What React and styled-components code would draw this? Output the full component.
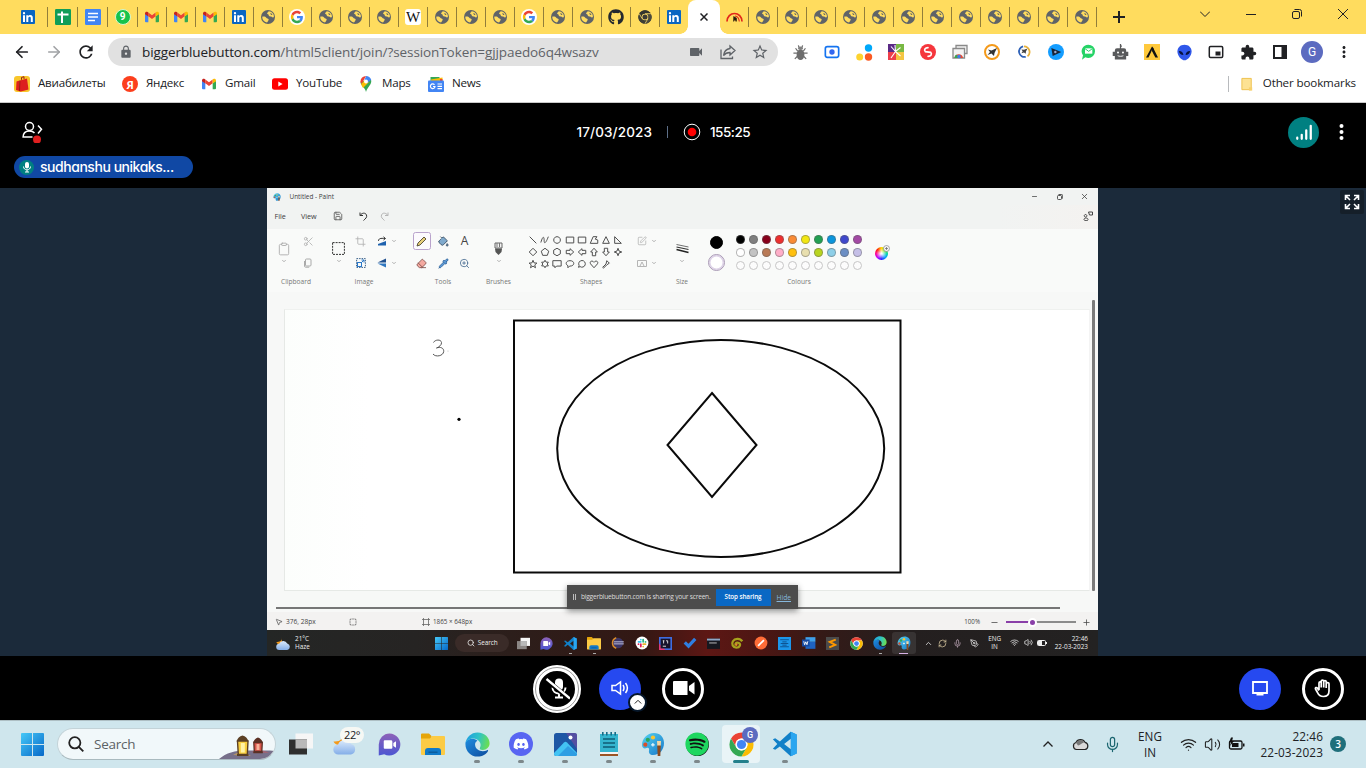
import React from "react";
import styled, { createGlobalStyle, css } from "styled-components";
import { MdLock, MdVideocam, MdStarBorder, MdMoreVert, MdRefresh, MdExtension } from "react-icons/md";
import { FaGithub, FaDiscord, FaSpotify } from "react-icons/fa";
import {
  ArrowLeft, ArrowRight, Save, Scissors, Crop, Clipboard, PaintBucket, Eraser, Pipette, ZoomIn, Mic,
  Volume2, Wifi, Search, ChevronUp, ChevronDown, SquareDashed, RefreshCw, PenTool, Plus, X, Minus,
  SquarePen, MousePointer2,
} from "lucide-react";

const UI = `"Open Sans", "Noto Sans", "Liberation Sans", sans-serif`;
const ROUND = `Inter, Lato, "Liberation Sans", sans-serif`;

const Global = createGlobalStyle`
  *, *::before, *::after { box-sizing: border-box; }
  html, body { margin: 0; padding: 0; overflow: hidden; background: #000; }
  body { font-family: ${UI}; color: #202124; }
  svg { display: block; flex: none; }
`;

const Desktop = styled.div`
  width: 1366px;
  height: 768px;
  display: flex;
  flex-direction: column;
  overflow: hidden;
`;

const Text = styled.span`
  font-size: ${(p) => p.$size || 12}px;
  color: ${(p) => p.$color || "inherit"};
  letter-spacing: ${(p) => p.$ls || 0}px;
  font-weight: ${(p) => p.$weight || 400};
  margin-left: ${(p) => p.$ml || 0}px;
  line-height: ${(p) => p.$lh || 1.2};
  white-space: nowrap;
`;

/* ---------- logos ---------- */

const Svg = ({ s = 16, children, box = "0 0 24 24", ...rest }) => (
  <svg width={s} height={s} viewBox={box} fill="none" {...rest}>{children}</svg>
);

const GmailLogo = ({ s = 16 }) => (
  <Svg s={s}>
    <path fill="#4285F4" d="M1.5 7v11.5A1.5 1.5 0 0 0 3 20h3.5V10.5z" />
    <path fill="#34A853" d="M17.5 20H21a1.5 1.5 0 0 0 1.5-1.5V7l-5 3.5z" />
    <path fill="#EA4335" d="M6.5 10.8V5.2L12 9.4l5.5-4.2v5.6L12 15z" />
    <path fill="#C5221F" d="M1.5 6.6v1.2l5 3.6V5.2l-1-.7C3.800 3.300 1.500 4.400 1.500 6.600z" />
    <path fill="#FBBC04" d="M17.500 5.200v6.200l5-3.600V6.600c0-2.200-2.300-3.300-4-2.100z" />
  </Svg>
);

const ChromeLogo = ({ s = 16, mono }) => (
  <Svg s={s}>
    <circle cx="12" cy="12" r="10" fill={mono ? "#3b3b35" : "#fff"} />
    <path fill={mono ? "#33352e" : "#EA4335"} d="M3.340 7A10 10 0 0 1 20.660 7H12A5 5 0 0 0 7.670 14.500Z" />
    <path fill={mono ? "#4b4a3c" : "#FBBC04"} d="M20.660 7A10 10 0 0 1 12 22L16.330 14.500A5 5 0 0 0 12 7Z" />
    <path fill={mono ? "#3e3f36" : "#34A853"} d="M12 22A10 10 0 0 1 3.340 7L7.670 14.500A5 5 0 0 0 16.330 14.500Z" />
    <circle cx="12" cy="12" r="4.900" fill={mono ? "#fbdc6a" : "#fff"} />
    <circle cx="12" cy="12" r="3.800" fill={mono ? "#3b3b35" : "#4285F4"} />
    {mono && <path stroke="#fbdc6a" strokeWidth="1.200" d="M12 7h9M7.700 14.500L3.400 7M16.300 14.500L12 22" />}
  </Svg>
);

const GoogleG = () => (
  <Svg s={16} box="0 0 48 48">
    <circle cx="24" cy="24" r="24" fill="#fff" />
    <g transform="translate(5.500 5.500) scale(.77)">
      <path fill="#EA4335" d="M24 9.500c3.540 0 6.710 1.220 9.210 3.600l6.850-6.850C35.900 2.380 30.470 0 24 0 14.620 0 6.510 5.380 2.560 13.220l7.980 6.190C12.430 13.720 17.740 9.500 24 9.500z" />
      <path fill="#4285F4" d="M46.980 24.550c0-1.570-.15-3.090-.38-4.550H24v9.020h12.940c-.58 2.960-2.260 5.480-4.780 7.180l7.730 6c4.510-4.180 7.090-10.360 7.090-17.650z" />
      <path fill="#FBBC05" d="M10.530 28.590c-.48-1.450-.76-2.990-.76-4.590s.27-3.140.76-4.590l-7.980-6.190C.92 16.460 0 20.120 0 24c0 3.880.92 7.540 2.560 10.780l7.970-6.190z" />
      <path fill="#34A853" d="M24 48c6.480 0 11.930-2.130 15.890-5.810l-7.730-6c-2.150 1.450-4.920 2.300-8.160 2.300-6.260 0-11.570-4.220-13.470-9.910l-7.980 6.190C6.510 42.620 14.620 48 24 48z" />
    </g>
  </Svg>
);

const EdgeLogo = ({ s = 24 }) => (
  <Svg s={s}>
    <defs>
      <linearGradient id="edgeTop" x1="0" y1=".4" x2="1" y2=".6">
        <stop offset="0" stopColor="#1f9fe0" /><stop offset=".5" stopColor="#2fc3c6" /><stop offset="1" stopColor="#6fe04a" />
      </linearGradient>
      <linearGradient id="edgeLow" x1="0" y1="0" x2="1" y2="1">
        <stop offset="0" stopColor="#1f8de0" /><stop offset="1" stopColor="#0c4a9c" />
      </linearGradient>
    </defs>
    <path fill="url(#edgeLow)" d="M2 11.500C2 17.500 6.500 22 12 22c4 0 7.300-2 8.700-4.700.3-.6-.2-.9-.7-.6-3.800 2-9.500.6-10-4.200C9.800 9.500 12 8.800 12 8.800 8 5.500 2 7.500 2 11.500z" />
    <path fill="url(#edgeTop)" d="M2 11.500C2.400 6 6.800 2 12 2c6 0 10 4.300 10 9 0 3.300-2.600 5.500-5.600 5.500-2.300 0-3-.9-2.300-2.100C16 11 12.500 7 8.500 7 5 7 2.500 9 2 11.500z" />
  </Svg>
);

const VsCodeLogo = ({ s = 24 }) => (
  <Svg s={s}>
    <path fill="#1180c8" fillRule="evenodd" d="M16.800 1.500L22 3.900V20.100L16.800 22.500 7.600 14.100 3.600 17 1.600 16 5.400 12 1.600 8 3.600 7 7.600 9.900ZM17 7.400L11.200 12 17 16.600Z" />
    <path fill="#2aa6f0" d="M17 1.500L22 3.900V20.100L17 22.500z" />
  </Svg>
);

const WinLogo = ({ s = 23 }) => (
  <Svg s={s} box="0 0 23 23">
    <defs>
      <linearGradient id="win" x1="0" y1="0" x2="23" y2="23" gradientUnits="userSpaceOnUse">
        <stop offset="0" stopColor="#45c8f8" /><stop offset="1" stopColor="#0668c8" />
      </linearGradient>
    </defs>
    <path fill="url(#win)" d="M0 1a1 1 0 0 1 1-1h10v11H0zM12 0h10a1 1 0 0 1 1 1v10H12zM0 12h11v11H1a1 1 0 0 1-1-1zM12 12h11v10a1 1 0 0 1-1 1H12z" />
  </Svg>
);

const FolderLogo = ({ s = 24 }) => (
  <Svg s={s}>
    <path fill="#e5a50a" d="M0 2.500a1 1 0 0 1 1-1h7l2.500 2.500V8H0z" />
    <path fill="#fccb45" d="M0 6.500h9l2-2.500h12a1 1 0 0 1 1 1v17a1 1 0 0 1-1 1H1a1 1 0 0 1-1-1z" />
    <path fill="#1079c8" d="M4 23v-4a3 3 0 0 1 3-3h10a3 3 0 0 1 3 3v4z" />
    <path fill="#0b5d9e" d="M7.500 19.500h9v1.500h-9z" />
  </Svg>
);

const ChatLogo = ({ s = 24 }) => (
  <Svg s={s}>
    <defs>
      <linearGradient id="chat" x1="0" y1="0" x2="0" y2="1">
        <stop offset="0" stopColor="#8d62b8" /><stop offset="1" stopColor="#4c56d2" />
      </linearGradient>
    </defs>
    <path fill="url(#chat)" d="M12 .5A11.500 11.500 0 1 1 6.500 22.200L.8 23.500V12A11.400 11.400 0 0 1 12 .5z" />
    <path fill="#fff" d="M6 8.500A1 1 0 0 1 7 7.500h6.500a1.500 1.500 0 0 1 1.500 1.500v6.500a1 1 0 0 1-1 1H7a1 1 0 0 1-1-1zM16 10.500l2.800-2v7L16 13.500z" />
  </Svg>
);

const TaskViewLogo = ({ s = 24, front = "#2f2f2f" }) => (
  <Svg s={s}>
    <path fill="#f6f6f6" d="M6.500 1.500h17.500v15H6.500z" />
    <path fill={front} d="M0 7.500h18v15H0z" />
    <path fill="#b9b9b9" d="M6.500 7.500H18v9H6.500z" />
  </Svg>
);

const WeatherLogo = ({ s = 24 }) => (
  <Svg s={s}>
    <defs>
      <linearGradient id="cloud" x1="0" y1="0" x2="0" y2="1">
        <stop offset="0" stopColor="#dcebfc" /><stop offset="1" stopColor="#84aee8" />
      </linearGradient>
    </defs>
    <path fill="#f49a1b" d="M9 2c1 4-1 8-8.500 7.500C2 13 6 14 9.500 12z" />
    <path fill="url(#cloud)" d="M5.500 22.500a5 5 0 0 1-.4-10A7 7 0 0 1 18 12a5.400 5.400 0 0 1 0 10.500z" />
  </Svg>
);

const PaintLogo = ({ s = 24 }) => (
  <Svg s={s}>
    <defs>
      <linearGradient id="pal" x1="0" y1="0" x2="1" y2="1">
        <stop offset="0" stopColor="#55d3f3" /><stop offset="1" stopColor="#1778c8" />
      </linearGradient>
    </defs>
    <path fill="url(#pal)" d="M13 1C6 1 1 7 1 13c0 3 2.500 4 4.500 3 2-.8 3 .5 2.500 2.500C7.500 21 9 23 12 23c6.500 0 11-5 11-12 0-6-4-10-10-10z" />
    <circle cx="12" cy="5.500" r="2.100" fill="#fbc531" />
    <circle cx="6.800" cy="7.800" r="2.100" fill="#2fa65a" />
    <circle cx="4.300" cy="12.700" r="2.100" fill="#d94f2b" />
    <path fill="#e9f7fb" d="M11.300 11h1.200v1.200h1.200v1.200h-1.200v1.200h-1.200v-1.200h-1.200v-1.200h1.200z" />
    <path fill="#f3d6a5" d="M16 9h4l-.3 5h-3.400z" />
    <path fill="#8a4b20" d="M16.200 13.500h3.600l-.5 10.500h-2.600z" />
  </Svg>
);

const LinkedIn = () => (
  <Svg s={14} box="0 0 14 14">
    <rect width="14" height="14" rx="1" fill="#0a66c2" />
    <path fill="#fff" d="M2 5.300h2V12H2zM3 2.100a1.150 1.150 0 1 1 0 2.300 1.150 1.150 0 0 1 0-2.300zM5.300 5.300h1.900v.9c.5-.8 1.200-1.100 2.100-1.100 2 0 2.500 1.300 2.500 3.100V12h-2V8.600c0-.9-.1-1.800-1.100-1.800S7.300 7.600 7.300 8.500V12h-2z" />
  </Svg>
);

const SheetsIcon = () => (
  <Svg s={16} box="0 0 16 16">
    <rect width="16" height="16" rx="1.200" fill="#0f9d58" />
    <path stroke="#fff" strokeWidth="2" d="M2.500 5.500h11M7 2.500V14" />
  </Svg>
);

const DocsIcon = () => (
  <Svg s={16} box="0 0 16 16">
    <rect width="16" height="16" rx="1.200" fill="#4285f4" />
    <path stroke="#fff" strokeWidth="1.600" d="M3 4.500h10M3 8h10M3 11.500h7" />
  </Svg>
);

const RoundBadge = styled.span`
  width: ${(p) => p.$s}px;
  height: ${(p) => p.$s}px;
  border-radius: ${(p) => p.$r || "50%"};
  background: ${(p) => p.$bg};
  color: ${(p) => p.$fg || "#fff"};
  border: ${(p) => p.$border || "none"};
  font: ${(p) => p.$font || "600 10px/1 Roboto, sans-serif"};
  display: flex;
  align-items: center;
  justify-content: center;
  flex: none;
`;

const SpeedIcon = () => (
  <Svg s={17} box="0 0 17 17">
    <path stroke="#e3261a" strokeWidth="1.700" d="M1 12.500C1.200 7.500 4.500 4.500 8.500 4.500s7.300 3 7.500 8" />
    <path stroke="#e3261a" strokeWidth="1.100" d="M9 7c2.500.3 4 2.500 4.300 5.500" />
    <path fill="#2c1c0a" d="M7.400 7L10.800 9v3.500H9.600L9 10.800l-1 1.700h-.8z" />
  </Svg>
);

/* ---------- browser ---------- */

const TabStrip = styled.div`
  height: 34px;
  display: flex;
  background: #ffdc5e;
  flex: none;
`;

const Tab = styled.div`
  width: ${(p) => p.$w}px;
  padding: 0 1px 0 ${(p) => p.$pl || 0}px;
  height: 34px;
  display: flex;
  align-items: center;
  justify-content: center;
  background: ${(p) => (p.$sep === false ? "none" : "linear-gradient(#927e3a, #927e3a) right 0 top 7px / 1px 20px no-repeat")};
`;

const ActiveTab = styled.div`
  position: relative;
  width: 32px;
  height: 34px;
  margin-left: -1px;
  background: #fff;
  border-radius: 8px 8px 0 0;
  display: flex;
  align-items: center;
  justify-content: center;
  &::before, &::after {
    content: "";
    position: absolute;
    bottom: 0;
    width: 8px;
    height: 8px;
  }
  &::before { left: -8px; background: radial-gradient(circle at 0 0, transparent 7.500px, #fff 8px); }
  &::after { right: -8px; background: radial-gradient(circle at 100% 0, transparent 7.500px, #fff 8px); }
`;

const NewTab = styled.div`
  width: 44px;
  display: flex;
  align-items: center;
  justify-content: center;
`;

const WindowButtons = styled.div`
  margin-left: auto;
  display: flex;
  height: 28px;
  width: 184px;
`;

const WindowButton = styled.div`
  width: 46px;
  display: flex;
  align-items: center;
  justify-content: center;
`;

const Globe = () => (
  <Svg s={14} box="0 0 14 14">
    <circle cx="7" cy="7" r="7" fill="#5f6368" />
    <path fill="#ffdc5e" d="M1.200 6.800C3 6.400 4.600 6.600 5.300 7.800c.5.800 1.800.6 2.300 1.400.4.800-.4 1.200-.6 1.900-.1.500-.5 1-1 1.400A5.900 5.900 0 0 1 1.200 6.800z" />
    <path fill="#ffdc5e" d="M7.600 1.200c2 .1 3.800 1.200 4.700 2.900.5.900.7 1.900.6 3-.8.600-1.700.2-2.300-.4-.6-.5-1.400-.1-2.200-.4-.9-.4-.3-1.300-1-1.800-.5-.4-1.300-.4-1.300-1.200 0-.9 1.100-.9 1.500-2.100z" />
    <path fill="#5f6368" d="M9 3.200l1.600.3.900 1.300-1.300.2z" />
  </Svg>
);
const Wiki = () => <RoundBadge $s={16} $r="3px" $bg="#fff" $fg="#111" $font='400 15px/1 "Liberation Serif", serif'>W</RoundBadge>;
const WhatsApp = () => <RoundBadge $s={16} $bg="#17c34b" $border="1px solid #d9f7cf" $font="700 10px/1 Roboto, sans-serif">9</RoundBadge>;

const leftTabs = [
  [48, LinkedIn, 8], [30, SheetsIcon], [30, DocsIcon], [30, WhatsApp],
  ...[GmailLogo, GmailLogo, GmailLogo, LinkedIn, Globe, GoogleG, Globe, Globe, Globe, Wiki, Globe, Globe,
    Globe, GoogleG, Globe, Globe, () => <FaGithub size={16} color="#24292f" />, () => <ChromeLogo mono />, LinkedIn].map((I) => [29, I]),
];

const Toolbar = styled.div`
  height: 36px;
  background: #fff;
  display: flex;
  align-items: center;
  flex: none;
  padding: 0 6px;
`;

const Cell = styled.div`
  width: ${(p) => p.$w || 32}px;
  display: flex;
  align-items: center;
  justify-content: center;
  flex: none;
`;

const AddressBar = styled.div`
  width: 670px;
  height: 28px;
  margin: 0 6px 0 6px;
  border-radius: 14px;
  background: #e1e1e1;
  display: flex;
  align-items: center;
  padding: 0 2px 0 11px;
`;

const AddressText = styled.div`
  flex: 1;
  margin-left: 9px;
  font-size: 13.500px;
  letter-spacing: -0.090px;
  color: #5f6368;
  white-space: nowrap;
  b { font-weight: 400; color: #202124; }
`;

const BookmarkBar = styled.div`
  height: 33px;
  background: #fff;
  border-bottom: 1px solid #c9c9c9;
  display: flex;
  align-items: center;
  padding: 0 10px 4px 14px;
  flex: none;
`;

const Bookmark = styled.div`
  width: ${(p) => p.$w}px;
  display: flex;
  align-items: center;
  gap: 8px;
  font-size: 11.600px;
  line-height: 16px;
  letter-spacing: -0.220px;
  white-space: nowrap;
`;

const BookmarkLabel = styled.span`
  padding-bottom: 2px;
`;

const OtherBookmarks = styled.div`
  margin-left: auto;
  height: 16px;
  border-left: 1px solid #b8babd;
  padding-left: 11px;
  display: flex;
  align-items: center;
  gap: 8px;
  font-size: 11.600px;
  line-height: 16px;
  letter-spacing: -0.130px;
  white-space: nowrap;
`;

const extensions = [
  <Svg s={17}><path stroke="#6d6d6d" strokeWidth="1.700" d="M5 6l3 4M19 6l-3 4M2 13h5M22 13h-5M4 21l4-4M20 21l-4-4M9 2l1 3M15 2l-1 3" /><ellipse cx="12" cy="15" rx="5.500" ry="7.500" fill="#6d6d6d" /><ellipse cx="12" cy="6" rx="3.500" ry="2.500" fill="#808080" /></Svg>,
  <Svg s={16}><rect x="2" y="4" width="20" height="16" rx="3" stroke="#1473f0" strokeWidth="2.500" /><circle cx="12" cy="12" r="4" fill="#3367f0" /></Svg>,
  <Svg s={17} box="0 0 17 17"><circle cx="12.500" cy="4" r="3.700" fill="#00a8fa" /><circle cx="3.700" cy="13" r="3.500" fill="#fdd32f" /><circle cx="12.500" cy="13" r="3.700" fill="#fb5a23" /></Svg>,
  <Svg s={16} box="0 0 16 16"><path fill="#5a2a86" d="M0 0h8v8H0z" /><path fill="#78b843" d="M8 0h8v8H8z" /><path fill="#ee3e4a" d="M0 8h8v8H0z" /><path fill="#f4c542" d="M8 8h8v8H8z" /><path stroke="#fff" strokeWidth="1.100" d="M3 14L7.500 7.500l5 4.500M3 2.500l4.500 5 5-4M7 1l.5 6.500" /></Svg>,
  <Svg s={16}><circle cx="12" cy="12" r="12" fill="#f5363c" /><path stroke="#fff" strokeWidth="2.400" strokeLinecap="round" d="M12 5.500C7.500 5.500 5.500 9 8 11.500l8 1M12 18.500c4.500 0 6.500-3.500 4-6l-8-1" /></Svg>,
  <Svg s={16} box="0 0 16 16"><path stroke="#8a8a8a" strokeWidth="1.300" d="M4 4V1.500h11v8h-2M1 14V4.500h11.500V14z" fill="#f3f3f3" /><path fill="#e24a33" d="M2.500 14a4.300 4.300 0 0 1 8.500 0z" /><path fill="#34a853" d="M2.500 14c0-2 1-3 2-3.500L6 14z" /><circle cx="7" cy="12.500" r="1.700" fill="#3c7ff0" /></Svg>,
  <Svg s={16} box="0 0 16 16"><circle cx="8" cy="8" r="7" stroke="#f49a1b" strokeWidth="2" fill="#fff" /><path fill="#333" d="M13 4L7.500 6.500 4 5.500l2 2.500-2.500 3 4-1.500 2.500 2.500.5-3z" /></Svg>,
  <Svg s={14} box="0 0 16 16"><path stroke="#e9b23c" strokeWidth="2" d="M8 1.500a6.500 6.500 0 0 1 4 11.500" /><path stroke="#2f62b8" strokeWidth="2" d="M7 1.500a6 6 0 1 0 3 12" /><path fill="#444" d="M12 4L8 5.500 5 5l1.500 2L5 9.500l3-1L10 10l.2-2.500z" /></Svg>,
  <Svg s={16}><circle cx="12" cy="12" r="12" fill="#149dff" /><path fill="#1a2536" d="M5 6l15 6-13 6z" /><circle cx="11" cy="12" r="1.800" fill="#9ac" /></Svg>,
  <Svg s={16}><path fill="#25d366" d="M12.500 1a10 10 0 0 1 0 20c-1.500 0-3-.3-4.500-1l-5 3.500L4.500 17A10 10 0 0 1 12.500 1z" /><path fill="#fff" d="M7.500 6.500h11v8h-11z" /><path stroke="#25d366" strokeWidth="1.500" d="M7.500 7l5.500 4 5.500-4" /></Svg>,
  <Svg s={17}><path fill="#58595b" d="M11.100 0h1.800v2H14v2h-1.100v2H17a3 3 0 0 1 3 3v2h3v6h-3v5H4v-5H1v-6h3V9a3 3 0 0 1 3-3h4.100z" /><circle cx="8.500" cy="12" r="1.400" fill="#fff" /><circle cx="15.500" cy="12" r="1.400" fill="#fff" /><path stroke="#fff" strokeWidth="1.200" d="M8 16.500c2 1.200 6 1.200 8 0" /></Svg>,
  <Svg s={16} box="0 0 16 16"><path fill="#ffc93c" d="M0 0h16v16H0z" /><path fill="#111" d="M2 13.500h2.500L8 6l1.500 3 1 .5-1-5L8 2.500z" /><path fill="#111" d="M8.500 2.500L14 13.500h-2.700L8 7z" /></Svg>,
  <Svg s={17}><path fill="#2f57ea" d="M12 1c6 0 10 4 10 9.500C22 17 16 23 12 23S2 17 2 10.500C2 5 6 1 12 1z" /><path fill="#07113a" d="M4 10c4 0 6 2 6.500 5.500C7 15.500 4.500 14 4 10zM20 10c-4 0-6 2-6.500 5.500C17 15.500 19.500 14 20 10z" /></Svg>,
  <Svg s={16} box="0 0 16 16"><rect x="1.300" y="2.500" width="13.400" height="11" rx="1.200" stroke="#202124" strokeWidth="1.500" /><path fill="#202124" d="M7.500 7.500h5v4h-5z" /></Svg>,
  <MdExtension size={17} color="#202124" />,
  <Svg s={14} box="0 0 14 14"><path stroke="#202124" strokeWidth="2" d="M1 1h12v12H1z" /><path fill="#202124" d="M8.500 1H13v12H8.500z" /></Svg>,
  <RoundBadge $s={22} $bg="#5c6bc0" $font="400 12px/1 Roboto, sans-serif">G</RoundBadge>,
  <MdMoreVert size={18} color="#202124" />,
];

const AviaIcon = () => (
  <Svg s={16} box="0 0 16 16"><rect width="16" height="16" rx="3" fill="#f9c62b" /><path fill="#dd1f1f" d="M2.500 5.500l3-1L5 15l-3-1zM6 4.500L13 2.500l1.500 11L7 15.500H5.500z" /><path stroke="#8d1010" strokeWidth=".9" d="M5.800 4.500L5.500 15M7.500 3.800V1.500l2.500-.8V3" /></Svg>
);
const YouTubeIcon = () => (
  <Svg s={16} box="0 0 16 16"><rect y="2.200" width="16" height="11.600" rx="2.500" fill="#f00" /><path fill="#fff" d="M6.300 5.500v5l4.300-2.500z" /></Svg>
);
const MapsIcon = () => (
  <Svg s={16} box="0 0 16 16"><path fill="#34a853" d="M8 16C7.500 12 2.500 10 2.500 5.800L13 3.500c1.500 5-3.500 7-5 12.500z" /><path fill="#fbbc04" d="M3 8l6-6 2 4-6 6z" /><path fill="#4285f4" d="M8 0c2.500 0 4.500 1.500 5.200 3.700L9.500 7 6.500 4z" /><path fill="#ea4335" d="M2.500 5.500A5.500 5.500 0 0 1 8 0L4.500 6.500 3 7.500z" /><circle cx="8" cy="5.500" r="2" fill="#fff" /></Svg>
);
const NewsIcon = () => (
  <Svg s={16} box="0 0 16 16"><path fill="#34a853" d="M2.500 1h9v5h-9z" /><path fill="#fbbc04" d="M3 3.500L14.500 1.500V7H3z" /><path fill="#ea4335" d="M12 3h2.500v4H12z" /><rect y="4.500" width="16" height="11.500" rx="1" fill="#4285f4" /><path stroke="#fff" strokeWidth="1.200" d="M9.500 8H14M9.500 10.300H14M9.500 12.600H14M6.500 8.800A2.300 2.300 0 1 0 7 10.500H5" /></Svg>
);

const bookmarks = [
  [108, <AviaIcon key="i" />, "Авиабилеты"],
  [79, <RoundBadge key="i" $s={16} $bg="#fc3f1d" $font='700 11px/1 "Open Sans", sans-serif'>Я</RoundBadge>, "Яндекс"],
  [71, <GmailLogo key="i" />, "Gmail"],
  [86, <YouTubeIcon key="i" />, "YouTube"],
  [70, <MapsIcon key="i" />, "Maps"],
  [60, <NewsIcon key="i" />, "News"],
];

const Browser = () => (
  <>
    <TabStrip>
      {leftTabs.map(([w, I, pl], i) => <Tab key={i} $w={w} $pl={pl} $sep={i !== leftTabs.length - 1}><I /></Tab>)}
      <ActiveTab>
        <Svg s={8} box="0 0 8 8"><path stroke="#202124" strokeWidth="1.500" d="M.5.500l7 7M7.500.500l-7 7" /></Svg>
      </ActiveTab>
      <Tab $w={29}><SpeedIcon /></Tab>
      {Array.from({ length: 12 }, (_, i) => <Tab key={i} $w={29}><Globe /></Tab>)}
      <NewTab><Svg s={12} box="0 0 12 12"><path stroke="#202124" strokeWidth="2" d="M6 0v12M0 6h12" /></Svg></NewTab>
      <WindowButtons>
        <WindowButton><Svg s={10} box="0 0 10 10"><path stroke="#202124" d="M0 2.500l5 5 5-5" /></Svg></WindowButton>
        <WindowButton><Svg s={10} box="0 0 10 10"><path stroke="#202124" d="M0 5.500h10" /></Svg></WindowButton>
        <WindowButton><Svg s={10} box="0 0 10 10"><rect x=".5" y="2.500" width="7" height="7" rx="1.500" stroke="#202124" /><path stroke="#202124" d="M2.500.500h5a2 2 0 0 1 2 2v5" /></Svg></WindowButton>
        <WindowButton><Svg s={10} box="0 0 10 10"><path stroke="#202124" d="M0 0l10 10M10 0L0 10" /></Svg></WindowButton>
      </WindowButtons>
    </TabStrip>
    <Toolbar>
      <Cell><ArrowLeft size={18} strokeWidth={2.300} color="#202124" /></Cell>
      <Cell><ArrowRight size={18} strokeWidth={2.200} color="#a0a2a5" /></Cell>
      <Cell><MdRefresh size={20} color="#202124" /></Cell>
      <AddressBar>
        <MdLock size={14} color="#5f6368" />
        <AddressText><b>biggerbluebutton.com</b>/html5client/join/?sessionToken=gjjpaedo6q4wsazv</AddressText>
        <Cell><MdVideocam size={16} color="#5f6368" /></Cell>
        <Cell><Svg s={16} box="0 0 16 16"><path stroke="#5f6368" strokeWidth="1.300" d="M1 5.500v9h11.500v-2M10 2l5 4.500L10 11V8.500C7 8.500 5 9.500 3.500 11.500 4 8 6 5 10 4.500z" /></Svg></Cell>
        <Cell><MdStarBorder size={18} color="#5f6368" /></Cell>
      </AddressBar>
      {extensions.map((e, i) => <Cell key={i}>{e}</Cell>)}
    </Toolbar>
    <BookmarkBar>
      {bookmarks.map(([w, icon, label]) => <Bookmark key={label} $w={w}>{icon}<BookmarkLabel>{label}</BookmarkLabel></Bookmark>)}
      <OtherBookmarks>
        <Svg s={15} box="0 0 15 16"><path fill="#fde293" stroke="#eec04a" d="M1.500 1.500h10v12h-10z" /><path fill="#f7d06b" d="M9 11h3.500v3.500H9z" /></Svg>
        <BookmarkLabel>Other bookmarks</BookmarkLabel>
      </OtherBookmarks>
    </BookmarkBar>
  </>
);

/* ---------- conference ---------- */

const MeetingHeader = styled.header`
  height: 85px;
  background: #000;
  color: #fff;
  font-family: ${ROUND};
  font-feature-settings: "cv11";
  flex: none;
  padding: 11px 14px 0;
`;

const HeaderRow = styled.div`
  height: 36px;
  display: grid;
  grid-template-columns: 1fr auto 1fr;
  align-items: center;
`;

const PeopleButton = styled.div`
  padding: 0 0 2px 7px;
`;

const MeetingInfo = styled.div`
  width: 174px;
  margin-right: 39px;
  display: flex;
  align-items: center;
`;

const Divider = styled.span`
  width: 1px;
  height: 12px;
  margin: 0 15px;
  background: #5d6f88;
`;

const HeaderActions = styled.div`
  display: flex;
  justify-content: flex-end;
  align-items: center;
`;

const TalkingPill = styled.div`
  width: 179px;
  height: 22px;
  margin-top: 6px;
  border-radius: 11px;
  background: #1048a4;
  display: flex;
  align-items: center;
  padding-left: 5px;
`;

const Stage = styled.main`
  height: 468px;
  background: #1b2a3a;
  display: flex;
  justify-content: space-between;
  padding-left: 267px;
  flex: none;
`;

const FullscreenButton = styled.div`
  width: 24px;
  height: 24px;
  margin: 2px 2px 0 0;
  background: #151f29;
  border-radius: 2px;
  display: flex;
  align-items: center;
  justify-content: center;
`;

const ActionsBar = styled.footer`
  height: 64px;
  background: #000;
  display: flex;
  align-items: center;
  padding: 1px 22px 0 533px;
  flex: none;
`;

const RoundButton = styled.div`
  position: relative;
  width: 42px;
  height: 42px;
  border-radius: 50%;
  margin-left: ${(p) => p.$ml || 0}px;
  background: ${(p) => (p.$filled ? "#2649f0" : "#000")};
  border: ${(p) => (p.$filled ? "none" : "3px solid #fff")};
  display: flex;
  align-items: center;
  justify-content: center;
  flex: none;
  ${(p) => p.$focused && css`
    width: 48px;
    height: 48px;
    border-width: 6px;
    &::before {
      content: "";
      position: absolute;
      inset: -4px;
      border-radius: 50%;
      border: 1px solid #9a9a9a;
    }
  `}
`;

const ButtonBadge = styled.span`
  position: absolute;
  right: -6px;
  bottom: -2px;
  width: 19px;
  height: 19px;
  border-radius: 50%;
  border: 2.500px solid #06172a;
  background: #fff;
  display: flex;
  align-items: center;
  justify-content: center;
`;

const PushRight = styled.div`
  margin-left: auto;
  display: flex;
  align-items: center;
`;

/* ---------- shared screen: Paint ---------- */

const SharedScreen = styled.div`
  position: relative;
  width: 831px;
  height: 468px;
  background: #f7f8f7;
  color: #3c3c3c;
  display: flex;
  flex-direction: column;
`;

const PaintTitle = styled.div`
  height: 17px;
  background: #f1f3f2;
  display: flex;
  align-items: center;
  padding: 0 1px 0 6px;
`;

const PaintMenu = styled.div`
  height: 24px;
  background: linear-gradient(90deg, #f1f3f2 0 88%, #f4f2f0);
  display: flex;
  align-items: center;
  padding: 0 5px 2px 7.500px;
`;

const Ribbon = styled.div`
  height: 63px;
  background: #f9faf9;
  display: flex;
  padding-top: 1px;
`;

const Group = styled.div`
  width: ${(p) => p.$w}px;
  display: flex;
  flex-direction: column;
  align-items: center;
`;

const Tools = styled.div`
  height: 44px;
  width: 100%;
  display: flex;
  justify-content: center;
`;

const Column = styled.div`
  width: ${(p) => p.$w}px;
  padding-left: ${(p) => p.$pl || 0}px;
  padding-top: ${(p) => p.$pt || 0}px;
  flex: none;
`;

const ToolRow = styled.div`
  height: ${(p) => p.$h || 22}px;
  display: flex;
  align-items: center;
  justify-content: ${(p) => p.$justify || "center"};
  gap: 4px;
`;

const GroupLabel = styled.div`
  font-size: 6.600px;
  line-height: 15px;
  color: #777;
  white-space: nowrap;
`;

const SelectedTool = styled.div`
  width: 18px;
  height: 18px;
  border: 1px solid #b9a3cc;
  border-radius: 2.500px;
  background: #fcfafd;
  display: flex;
  align-items: center;
  justify-content: center;
`;

const ShapeGrid = styled.div`
  display: grid;
  grid-template-columns: repeat(8, 12.150px);
  grid-auto-rows: 12px;
  place-items: center;
  margin-left: 13px;
  padding-top: 4px;
`;

const Palette = styled.div`
  display: grid;
  grid-template-columns: repeat(10, 13px);
  grid-auto-rows: 13px;
  place-items: center;
  padding-top: 3px;
`;

const Swatch = styled.span`
  width: ${(p) => p.$s || 9}px;
  height: ${(p) => p.$s || 9}px;
  border-radius: 50%;
  background: ${(p) => p.$c};
  border: 1px solid ${(p) => p.$b || "rgba(90,90,90,.45)"};
  box-shadow: ${(p) => (p.$ring ? "inset 0 0 0 1.500px #ded3e8" : "none")};
`;

const ColourWheel = styled.div`
  position: relative;
  width: 13px;
  height: 13px;
  margin: 17px 0 0 11px;
  border-radius: 50%;
  background: radial-gradient(circle, #fff 5%, transparent 60%), conic-gradient(#ffd500, #6fe000, #00d5a0, #00a0ff, #3020ff, #c000ff, #ff0090, #ff2000, #ffd500);
  svg { position: absolute; right: -2px; top: -2px; }
`;

const Workspace = styled.div`
  position: relative;
  height: 320px;
  padding: 17px 4px 0 17px;
  display: flex;
  gap: 2px;
`;

const Canvas = styled.div`
  width: 806px;
  height: 282px;
  flex: none;
  background: linear-gradient(90deg, #fcfefc, #fff 84px);
  border: 1px solid #e6e9e6;
  border-top-color: #eff1ef;
  border-right-color: #f4f4f4;
  svg { margin-left: -1px; }
`;

const VScroll = styled.div`
  width: 3px;
  height: 291px;
  flex: none;
  margin-top: -9px;
  border-radius: 1px;
  background: #7b7b7b;
`;

const HScroll = styled.div`
  position: absolute;
  left: 9px;
  bottom: 3px;
  width: 784px;
  height: 2px;
  background: #767676;
`;

const ShareNotice = styled.div`
  position: absolute;
  left: 300px;
  top: 397px;
  width: 231px;
  height: 24px;
  background: #4c4c4c;
  box-shadow: 0 2px 6px rgba(0, 0, 0, 0.45);
  display: flex;
  align-items: center;
  padding: 0 7px 0 5px;
  color: #dcdcdc;
`;

const StopButton = styled.div`
  width: 55px;
  height: 17px;
  margin-left: auto;
  background: #0a68c4;
  display: flex;
  align-items: center;
  justify-content: center;
`;

const HideLink = styled.span`
  margin-left: 6px;
  font-size: 6.700px;
  color: #86b8dd;
  text-decoration: underline;
`;

const StatusBar = styled.div`
  height: 18px;
  background: #f3f2f1;
  display: flex;
  align-items: center;
  padding: 2px 7px 0 8px;
  color: #444;
`;

const StatusItem = styled.div`
  width: ${(p) => p.$w}px;
  display: flex;
  align-items: center;
  gap: 3px;
`;

const ZoomTrack = styled.div`
  width: 70px;
  height: 2px;
  margin: 0 6px 0 -2px;
  background: linear-gradient(90deg, #8a3fa8 27px, #8b8b8b 27px);
  display: flex;
  align-items: center;
  padding-left: 22px;
`;

const ZoomThumb = styled.span`
  width: 9px;
  height: 9px;
  border-radius: 50%;
  background: #8a3fa8;
  border: 2px solid #fff;
`;

const PaintWindowButtons = styled.div`
  margin-left: auto;
  display: flex;
  align-items: center;
`;

const DarkTaskbar = styled.div`
  height: 26px;
  background: linear-gradient(90deg, #242625 0%, #262423 18%, #2b1f1c 27%, #331814 45%, #5d1714 53%, #4b1613 60%, #341a17 67%, #241f1f 77%, #232222 100%);
  display: flex;
  align-items: center;
  padding: 0 10px 0 9px;
  color: #eee;
`;

const DarkSearch = styled.div`
  width: 54px;
  height: 18px;
  margin: 0 2px 0 7px;
  border-radius: 9px;
  background: #3a2b28;
  display: flex;
  align-items: center;
  justify-content: center;
  gap: 3px;
`;

const MiniCell = styled.div`
  width: ${(p) => p.$w || 23.800}px;
  height: 22px;
  border-radius: 3px;
  flex: none;
  display: flex;
  align-items: center;
  justify-content: center;
`;

const MiniApp = styled(MiniCell)`
  position: relative;
  background: ${(p) => (p.$active ? "rgba(255,255,255,.09)" : "none")};
  &::after {
    content: "";
    display: ${(p) => (p.$running ? "block" : "none")};
    position: absolute;
    bottom: 0;
    width: ${(p) => (p.$active ? 9 : 3)}px;
    height: 1px;
    background: ${(p) => (p.$active ? "#d9b3e6" : "#aaa")};
  }
`;

const Stack = styled.div`
  display: flex;
  flex-direction: column;
  align-items: ${(p) => p.$align || "flex-start"};
  margin-left: ${(p) => p.$ml || 0}px;
`;

const TaskApps = styled.div`
  margin-left: auto;
  display: flex;
  align-items: center;
  width: 486px;
`;

const TrayIcons = styled.div`
  width: 37px;
  margin-left: 9px;
  display: flex;
  justify-content: space-between;
`;

const RightStack = styled.div`
  width: 41px;
  display: flex;
  flex-direction: column;
  align-items: flex-end;
`;

const shapePaths = [
  "M2 2l8 8", "M1 9c3-10 4-6 4-2s2 3 5-5", "M6 2a4 4 0 1 0 .1 0z", "M1.500 2.500h9v7h-9z", "M1.500 2.500h9v7h-9z", "M5 2h4.500L7.500 5l3 1v4H1.500z", "M6 2l4 8H2z", "M2 2v8h8z",
  "M6 1.500L10.500 6 6 10.500 1.500 6z", "M6 1.500l4.500 3.500-1.700 5H3.200L1.500 5z", "M6 1.500l4 2.300v4.400L6 10.500 2 8.200V3.800z", "M1.500 4h4.500V2l4.500 4L6 10V8H1.500z", "M10.500 4H6V2L1.500 6 6 10V8h4.500z", "M4 10.500V6H2l4-4.500L10 6H8v4.500z", "M4 1.500V6H2l4 4.500L10 6H8V1.500z", "M6 1.500l1.200 3.300L10.500 6 7.200 7.200 6 10.500 4.800 7.200 1.500 6l3.300-1.200z",
  "M6 1.500l1.300 3.200 3.400.2-2.600 2.200.9 3.400L6 8.500l-3 2 .9-3.400L1.300 4.900l3.400-.2z", "M6 1.500l1.300 2.300H10L8.700 6 10 8.300H7.300L6 10.500 4.700 8.300H2L3.300 6 2 3.800h2.700z", "M1 2h10v6.500H5.500L3.500 10.500V8.500H1z", "M6 2c6 0 6 6.500 0 6.500h-.5L3.500 10.500V8C0 6.500 1 2 6 2z", "M6 1.800a4 4 0 1 1-2.300 7.300L1.800 10l.7-2.300A4 4 0 0 1 6 1.800z", "M6 10.500L2 6C0 3 4 1 6 4c2-3 6-1 4 2z", "M7 2l3 3-3 2-4 4-1-1 4-4z",
];

const palette = [
  "#000000", "#7f7f7f", "#88001b", "#ed2f2f", "#f98b35", "#f2e713", "#22a052", "#0b95dc", "#3f48cc", "#a349a4",
  "#ffffff", "#c3c3c3", "#b97a56", "#ffaec8", "#ffc00e", "#e8dfae", "#b8d420", "#8ecfe8", "#6c8fc4", "#c5bfe7",
];

const Chevron = () => <ChevronDown size={6} color="#888" strokeWidth={2.500} />;
const ic = { size: 11, strokeWidth: 1.800, color: "#555" };
const pale = { size: 11, strokeWidth: 1.800, color: "#b0b0b0" };

const PaintRibbon = () => (
  <Ribbon>
    <Group $w={58}>
      <Tools>
        <Column $w={24} $pt={10}><ToolRow $h={17}><Clipboard size={14} strokeWidth={1.500} color="#aaa" /></ToolRow><ToolRow $h={8}><Chevron /></ToolRow></Column>
        <Column $w={24}><ToolRow><Scissors {...pale} /></ToolRow><ToolRow><Svg s={10} box="0 0 10 10"><rect x="2.500" y="1" width="5.500" height="7" rx="1" stroke="#aaa" /><path stroke="#aaa" d="M1.500 3v5a1.200 1.200 0 0 0 1.200 1.200h3.500" /></Svg></ToolRow></Column>
      </Tools>
      <GroupLabel>Clipboard</GroupLabel>
    </Group>
    <Group $w={78}>
      <Tools>
        <Column $w={27} $pt={10}><ToolRow $h={17}><Svg s={13} box="0 0 13 13"><rect x=".6" y=".6" width="11.800" height="11.800" stroke="#333" strokeDasharray="2 1" /></Svg></ToolRow><ToolRow $h={8}><Chevron /></ToolRow></Column>
        <Column $w={17}><ToolRow><Crop {...pale} /></ToolRow><ToolRow><Svg s={10} box="0 0 10 10"><rect x=".6" y=".6" width="8.800" height="8.800" stroke="#3a5f88" strokeDasharray="1.500 1" /><rect x="1.500" y="4.500" width="4" height="4" stroke="#2b78c8" /><path stroke="#2b78c8" d="M5 5l3-3M5.500 2H8v2.500" /></Svg></ToolRow></Column>
        <Column $w={34} $pl={8}>
          <ToolRow $justify="flex-start"><Svg s={10} box="0 0 10 10"><path fill="#1f62ae" d="M1 9.500V8l8-3v4.500z" /><path stroke="#333" d="M1.500 5c0-2.500 2-3 6.500-2.500M6.500 .8L8.500 2.500 6.500 4" /></Svg><Chevron /></ToolRow>
          <ToolRow $justify="flex-start"><Svg s={10} box="0 0 10 10"><path fill="#1f4f8e" d="M9 .5v4L.5 4.500z" /><path fill="#2f76c0" d="M9 9.500v-4L.5 5.500z" /></Svg><Chevron /></ToolRow>
        </Column>
      </Tools>
      <GroupLabel>Image</GroupLabel>
    </Group>
    <Group $w={80}>
      <Tools>
        <Column $w={21.5}><ToolRow><SelectedTool><Svg s={11} box="0 0 11 11"><path fill="#e6cf7b" stroke="#4d4630" strokeWidth=".9" d="M1 10l1-3 6-6 2 2-6 6z" /></Svg></SelectedTool></ToolRow><ToolRow><Eraser {...ic} fill="#f4a9a0" color="#7a4a45" /></ToolRow></Column>
        <Column $w={21.5}><ToolRow><PaintBucket {...ic} fill="#7fa9cc" color="#34495e" /></ToolRow><ToolRow><Pipette {...ic} color="#2c5f96" fill="#5c9bd8" /></ToolRow></Column>
        <Column $w={21.5}><ToolRow><Text $size={12} $color="#444">A</Text></ToolRow><ToolRow><ZoomIn {...ic} color="#456a8f" /></ToolRow></Column>
      </Tools>
      <GroupLabel>Tools</GroupLabel>
    </Group>
    <Group $w={31}>
      <Tools>
        <Column $w={31} $pt={10}><ToolRow $h={17}><Svg s={13} box="0 0 13 13"><path stroke="#666" fill="#f4f4f4" d="M3 1h7v5H3z" /><path stroke="#777" d="M5 1v4M7.500 1v4" /><path fill="#555" d="M3 6.500h7L9.500 10l-3 3-3-3z" /></Svg></ToolRow><ToolRow $h={8}><Chevron /></ToolRow></Column>
      </Tools>
      <GroupLabel>Brushes</GroupLabel>
    </Group>
    <Group $w={154}>
      <Tools>
        <ShapeGrid>
          {shapePaths.map((d, i) => <Svg key={i} s={10} box="0 0 12 12"><path stroke="#505050" strokeWidth="1.200" d={d} /></Svg>)}
        </ShapeGrid>
        <Column $w={43.8} $pl={13}>
          <ToolRow $justify="flex-start"><SquarePen {...pale} size={10} /><Chevron /></ToolRow>
          <ToolRow $justify="flex-start"><Svg s={10} box="0 0 10 10"><path stroke="#b5b5b5" d="M.5 2.500h9v6h-9zM3 8l2-4 2 4" /></Svg><Chevron /></ToolRow>
        </Column>
      </Tools>
      <GroupLabel>Shapes</GroupLabel>
    </Group>
    <Group $w={28}>
      <Tools>
        <Column $w={28} $pt={10}><ToolRow $h={17}><Svg s={13} box="0 0 13 13"><path stroke="#333" strokeWidth=".7" d="M.5 2.500L12.500 5" /><path stroke="#333" strokeWidth="1.200" d="M.5 5L12.500 7.500" /><path stroke="#222" strokeWidth="1.700" d="M.5 7.500l12 3" /></Svg></ToolRow><ToolRow $h={8}><Chevron /></ToolRow></Column>
      </Tools>
      <GroupLabel>Size</GroupLabel>
    </Group>
    <Group $w={206}>
      <Tools>
        <Column $w={37.9} $pl={3}>
          <ToolRow $h={24}><Swatch $s={13} $c="#000" $b="#000" /></ToolRow>
          <ToolRow $h={17}><Swatch $s={17} $c="#fff" $b="#a898b4" $ring /></ToolRow>
        </Column>
        <Palette>
          {palette.map((c, i) => <Swatch key={i} $c={c} />)}
          {Array.from({ length: 10 }, (_, i) => <Swatch key={"e" + i} $c="#fcfcfc" $b="#c6c6c6" />)}
        </Palette>
        <Column $w={38.1}>
          <ColourWheel><Svg s={7} box="0 0 7 7"><circle cx="3.500" cy="3.500" r="3" fill="#f4f4f4" stroke="#888" strokeWidth=".7" /><path stroke="#666" strokeWidth=".7" d="M3.500 2v3M2 3.500h3" /></Svg></ColourWheel>
        </Column>
      </Tools>
      <GroupLabel>Colours</GroupLabel>
    </Group>
  </Ribbon>
);

const miniApps = [
  <TaskViewLogo s={13} front="#8b8684" />,
  <ChatLogo s={13} />,
  <VsCodeLogo s={15} />,
  <FolderLogo s={14} />,
  <Svg s={14}><circle cx="12" cy="12" r="9" fill="#3b3566" /><path stroke="#d98b2b" strokeWidth="2.500" d="M9 3a9.500 9.500 0 0 0 0 18" /><path stroke="#cfd0ea" strokeWidth="1.500" d="M5 10h17M5 13.500h17" /></Svg>,
  <Svg s={14}><circle cx="12" cy="12" r="11" fill="#fff" /><g strokeWidth="3" strokeLinecap="round"><path stroke="#36c5f0" d="M6 10h4M10 6v.1" /><path stroke="#2eb67d" d="M14 6v4M18 10v.1" /><path stroke="#ecb22e" d="M14 14h4M14 18v.1" /><path stroke="#e01e5a" d="M10 14v4M6 14v.1" /></g></Svg>,
  <Svg s={13}><path fill="#3f6de0" d="M0 0h24v24H0z" /><path fill="#e03a78" d="M0 12L12 24H0z" /><path fill="#17132b" d="M3 3h18v18H3z" /><path stroke="#fff" strokeWidth="1.500" d="M7 7h3M8.500 7v5M13 7h3v5M7 17h6" /></Svg>,
  <Svg s={14}><path stroke="#2f7ee0" strokeWidth="5.500" d="M3 11l6.500 6.500L21 5" /></Svg>,
  <Svg s={13}><path fill="#16181f" d="M0 3h24v19H0z" /><path fill="#8fa7c6" d="M0 3h24v3.500H0z" /><path stroke="#ddd" strokeWidth="1.500" d="M4 11h14" /></Svg>,
  <Svg s={14}><path stroke="#a6a21d" strokeWidth="4" d="M21 9C17 3 8 4 5 9s0 11 6 11 8-6 4-8-7 1-5 4" /><circle cx="11" cy="15" r="2" fill="#e8862c" /></Svg>,
  <Svg s={14}><circle cx="12" cy="12" r="11" fill="#ff6c37" /><path stroke="#fff" strokeWidth="3" d="M7 17L17 7" /></Svg>,
  <Svg s={13}><path fill="#1c96ea" d="M0 0h24v24H0z" /><path stroke="#0c4f8c" strokeWidth="1.700" d="M4 5h16M5 12h14M4 18h16M8 9h8M8 15h8" /></Svg>,
  <Svg s={14}><path fill="#3fa0ea" d="M6 2h17v8H6z" /><path fill="#1e62c0" d="M6 10h17v12H6z" /><path fill="#1649a0" d="M0 6h13v12H0z" /><path stroke="#fff" strokeWidth="1.500" d="M3 9l1.500 6 2-5 2 5L10 9" /></Svg>,
  <Svg s={13}><path fill="#4b4b4b" d="M0 0h24v24H0z" /><path stroke="#ff9800" strokeWidth="3.500" d="M18 5L7 9l10 5.500L6 19" /></Svg>,
  <ChromeLogo s={15} />,
  <EdgeLogo s={16} />,
  <PaintLogo s={14} />,
];

const runningMini = [2, 3, 15, 16];

const PaintScreen = () => (
  <SharedScreen>
    <PaintTitle>
      <PaintLogo s={8} />
      <Text $size={6.4} $ml={8.5}>Untitled - Paint</Text>
      <PaintWindowButtons>
        <MiniCell $w={25}><Minus size={7} strokeWidth={2.500} /></MiniCell>
        <MiniCell $w={25}><Svg s={6} box="0 0 10 10"><rect x=".8" y="2.500" width="6.700" height="6.700" rx="1.500" stroke="#333" strokeWidth="1.400" /><path stroke="#333" strokeWidth="1.400" d="M2.500.800h5a2 2 0 0 1 2 2v5" /></Svg></MiniCell>
        <MiniCell $w={25}><X size={9} strokeWidth={2} /></MiniCell>
      </PaintWindowButtons>
    </PaintTitle>
    <PaintMenu>
      <Text $size={7.2}>File</Text>
      <Text $size={7.2} $ml={15}>View</Text>
      <MiniCell $w={43}><Save {...ic} size={10} strokeWidth={2} /></MiniCell>
      <MiniCell $w={7}><Svg s={9} box="0 0 9 9"><path stroke="#333" strokeWidth="1" d="M1 .5v3h3M1.200 3.400C3 .5 6.500.500 7.500 3c.8 2.500-1 3.500-3 5.500" /></Svg></MiniCell>
      <MiniCell $w={36}><Svg s={9} box="0 0 9 9"><path stroke="#b5b5b5" strokeWidth="1" d="M8 .5v3H5M7.800 3.400C6 .5 2.500.500 1.500 3c-.8 2.500 1 3.500 3 5.500" /></Svg></MiniCell>
      <PushRight><Svg s={10} box="0 0 10 10"><path stroke="#444" d="M5.500 1h4v3h-3zM2.500 3.500a1.300 1.300 0 1 0 .1 0zM1 8.500c0-2 4-2 4 0s-4 1.500-4 0" /></Svg></PushRight>
    </PaintMenu>
    <PaintRibbon />
    <Workspace>
      <Canvas>
        <svg width="805" height="280" viewBox="284 310 805 280" fill="none">
          <rect x="514" y="320.500" width="386.500" height="252" stroke="#0a0a0a" strokeWidth="2" />
          <ellipse cx="720.700" cy="448.500" rx="163.500" ry="108.500" stroke="#0a0a0a" strokeWidth="2" />
          <path d="M712 393L756.500 445 712 497 667.500 445z" stroke="#0a0a0a" strokeWidth="2" />
          <path d="M433.500 342.500c1.500-3 7.500-3.500 8 0 .3 2.500-2.500 4.500-5 5.500 4-1.500 7.500 0 7.200 3.500-.4 4.500-8 6-10.700 2.500" stroke="#555" strokeWidth="1" />
          <circle cx="459" cy="419.300" r="1.600" fill="#000" />
          <circle cx="448" cy="351" r=".6" fill="#bbb" />
        </svg>
      </Canvas>
      <VScroll />
      <HScroll />
    </Workspace>
    <StatusBar>
      <StatusItem $w={74}><MousePointer2 size={8} strokeWidth={2} /><Text $size={6.6}>376, 28px</Text></StatusItem>
      <StatusItem $w={73}><SquareDashed size={8} strokeWidth={2.200} /></StatusItem>
      <StatusItem $w={100}><Svg s={8} box="0 0 8 8"><path stroke="#666" strokeWidth=".8" d="M1.500 0v8M6.500 0v8M0 1.500h8M0 6.500h8" /></Svg><Text $size={6.3}>1865 × 648px</Text></StatusItem>
      <PushRight>
        <Text $size={6.2}>100%</Text>
        <MiniCell $w={28}><Minus size={9} strokeWidth={2} /></MiniCell>
        <ZoomTrack><ZoomThumb /></ZoomTrack>
        <Plus size={9} strokeWidth={2} />
      </PushRight>
    </StatusBar>
    <DarkTaskbar>
      <WeatherLogo s={15} />
      <Stack $ml={4}>
        <Text $size={6.4} $lh={1.3}>21°C</Text>
        <Text $size={6.4} $lh={1.3}>Haze</Text>
      </Stack>
      <TaskApps>
        <WinLogo s={13} />
        <DarkSearch><Search size={8} strokeWidth={2.300} /><Text $size={6.4} $ls={-0.1}>Search</Text></DarkSearch>
        {miniApps.map((a, i) => <MiniApp key={i} $active={i === 16} $running={runningMini.includes(i)}>{a}</MiniApp>)}
      </TaskApps>
      <MiniCell $w={15}><ChevronUp size={9} /></MiniCell>
      <MiniCell $w={13}><RefreshCw size={9} color="#d9c8a0" /></MiniCell>
      <MiniCell $w={16}><Mic size={9} color="#b7a0b0" /></MiniCell>
      <MiniCell $w={18}><PenTool size={9} color="#ddd" /></MiniCell>
      <Stack $align="center" $ml={5}>
        <Text $size={6.3} $lh={1.35}>ENG</Text>
        <Text $size={6.3} $lh={1.35}>IN</Text>
      </Stack>
      <TrayIcons>
        <Wifi size={9} /><Volume2 size={9} />
        <Svg s={10} box="0 0 10 10"><rect x=".5" y="2.500" width="8" height="5" rx="1" stroke="#eee" /><path fill="#eee" d="M1 3h4v4H1zM9 4h1v2H9z" /></Svg>
      </TrayIcons>
      <RightStack>
        <Text $size={6.4} $lh={1.3}>22:46</Text>
        <Text $size={6.4} $lh={1.3}>22-03-2023</Text>
      </RightStack>
    </DarkTaskbar>
    <ShareNotice>
      <Svg s={6} box="0 0 6 6"><path stroke="#bbb" strokeWidth="1" d="M1.500 0v6M3.500 0v6" /></Svg>
      <Text $size={6.6} $ml={3} $ls={-0.22}>biggerbluebutton.com is sharing your screen.</Text>
      <StopButton><Text $size={6.3} $weight={600} $ls={-0.1} $color="#fff">Stop sharing</Text></StopButton>
      <HideLink>Hide</HideLink>
    </ShareNotice>
  </SharedScreen>
);

const Conference = () => (
  <>
    <MeetingHeader>
      <HeaderRow>
        <PeopleButton>
          <Svg s={24} box="0 0 24 24">
            <g stroke="#fff" strokeWidth="1.500">
              <circle cx="8.500" cy="7.500" r="4" />
              <path d="M2 18.500c0-4 2.500-6.500 6.500-6.500 2.500 0 4 .8 5 2M1.500 18h10M17 6.500l3.500 3.800L17 14.500" />
            </g>
            <circle cx="16" cy="20.500" r="4" fill="#e01f1f" />
          </Svg>
        </PeopleButton>
        <MeetingInfo>
          <Text $size={13.5} $weight={500} $ls={0.12}>17/03/2023</Text>
          <Divider />
          <Svg s={18} box="0 0 18 18"><circle cx="9" cy="9" r="7.800" stroke="#fff" /><circle cx="9" cy="9" r="4.300" fill="#f00" /></Svg>
          <Text $size={13.5} $weight={500} $ml={9} $ls={-0.5}>155:25</Text>
        </MeetingInfo>
        <HeaderActions>
          <RoundBadge $s={31} $bg="#008081">
            <Svg s={18} box="0 0 16 16"><path stroke="#fff" strokeWidth="2" strokeLinecap="round" d="M2 13v1M6 10.500v3.500M10 6.500v7.500M14 2.500v11.500" /></Svg>
          </RoundBadge>
          <Cell $w={33}><Svg s={18} box="0 0 18 18"><g fill="#fff"><circle cx="14.500" cy="3" r="2" /><circle cx="14.500" cy="9" r="2" /><circle cx="14.500" cy="15" r="2" /></g></Svg></Cell>
        </HeaderActions>
      </HeaderRow>
      <TalkingPill>
        <RoundBadge $s={15} $bg="#008081"><Svg s={12}><rect x="8" y="2" width="8" height="13" rx="4" fill="#fff" /><path stroke="#fff" strokeWidth="2" d="M5 11c0 9 14 9 14 0M12 18v4M8 22h8" /></Svg></RoundBadge>
        <Text $size={14} $ml={6} $weight={500} $ls={-0.46}>sudhanshu unikaks...</Text>
      </TalkingPill>
    </MeetingHeader>
    <Stage>
      <PaintScreen />
      <FullscreenButton>
        <Svg s={16} box="0 0 16 16"><path stroke="#fff" strokeWidth="1.600" d="M1.500 6V1.500H6M1.500 1.500L6 6M10 1.500h4.500V6M14.500 1.500L10 6M1.500 10v4.500H6M1.500 14.500L6 10M14.500 10v4.500H10M14.500 14.500L10 10" /></Svg>
      </FullscreenButton>
    </Stage>
    <ActionsBar>
      <RoundButton $focused>
        <Svg s={26} box="0 0 26 26">
          <rect x="11" y="2.500" width="8" height="12" rx="4" fill="#fff" />
          <path stroke="#fff" strokeWidth="2" d="M8.500 11.500c0 8 13 8 13 0M15 18v3.500M11 21.500h8" />
          <path stroke="#000" strokeWidth="4.500" d="M2 3.500L25 22.500" />
          <path stroke="#fff" strokeWidth="2.300" d="M2.500 3L26 22.500" />
        </Svg>
      </RoundButton>
      <RoundButton $filled $ml={18}>
        <Svg s={20} box="0 0 20 20"><path stroke="#fff" strokeWidth="1.500" d="M2 6.500h3.500L10.500 3v12L5.500 11.500H2zM13 6c1.300 2 1.300 4 0 6M15.500 4c2.300 3 2.300 7 0 10" /></Svg>
        <ButtonBadge><Svg s={8} box="0 0 8 8"><path stroke="#222" d="M.8 5.500L4 2.300l3.200 3.200" /></Svg></ButtonBadge>
      </RoundButton>
      <RoundButton $ml={21}>
        <Svg s={24}><path fill="#fff" d="M2 5a1 1 0 0 1 1-1h13.500v14H3a1 1 0 0 1-1-1zM18 9l5.500-4v12.500L18 13.500z" /></Svg>
      </RoundButton>
      <PushRight>
        <RoundButton $filled><Svg s={20} box="0 0 20 20"><path stroke="#fff" strokeWidth="1.800" d="M3 3h14v11H3z" /><path fill="#fff" d="M6.500 14.500h7v2h-7z" /></Svg></RoundButton>
        <RoundButton $ml={21}>
          <Svg s={20} box="0 0 20 20"><path stroke="#fff" strokeWidth="1.700" strokeLinejoin="round" d="M6 11V4c0-1.600 2.200-1.600 2.200 0V8.500M8.200 8.500V2.300c0-1.600 2.500-1.600 2.500 0V8.500M10.700 8.500V2.800c0-1.600 2.500-1.600 2.500 0V9M13.200 9V4.700c0-1.500 2.800-1.500 2.800 0V12c0 4-1.500 5.500-5.500 5.500-3.500 0-5-1.500-6-4L2.500 10c-.6-1.500 1.200-2 2-.8L6 11.500" /></Svg>
        </RoundButton>
      </PushRight>
    </ActionsBar>
  </>
);

/* ---------- Windows taskbar ---------- */

const Taskbar = styled.div`
  height: 48px;
  background: #cfe6ed;
  border-top: 1px solid #aebfc4;
  display: flex;
  align-items: center;
  padding: 0 20px 1px 21px;
  flex: none;
`;

const SearchBox = styled.div`
  width: 219px;
  height: 32px;
  margin: 0 3px 0 13px;
  border-radius: 16px;
  background: #f1f8fa;
  border: 1px solid #c3d3d8;
  border-bottom-color: #a9babf;
  display: flex;
  align-items: center;
  padding-left: 10px;
  overflow: hidden;
  svg:last-child { margin-left: auto; align-self: flex-end; }
`;

const AppCell = styled.div`
  position: relative;
  width: 38px;
  height: 38px;
  margin: 0 3px;
  border-radius: 4px;
  display: flex;
  align-items: center;
  justify-content: center;
  background: ${(p) => (p.$active ? "#e9f4f7" : "none")};
  flex: none;
  &::after {
    content: "";
    display: ${(p) => (p.$running ? "block" : "none")};
    position: absolute;
    bottom: 0;
    left: 50%;
    width: ${(p) => (p.$active ? 16 : 6)}px;
    height: 3px;
    border-radius: 2px;
    transform: translateX(-50%);
    background: ${(p) => (p.$active ? "#24808c" : "#7d888b")};
  }
`;

const TempBadge = styled.span`
  position: absolute;
  left: 14px;
  top: 2px;
  width: 24px;
  height: 16px;
  border-radius: 8px;
  background: #f6f8f4;
  font-size: 11px;
  line-height: 15px;
  text-align: center;
  letter-spacing: -0.500px;
`;

const ProfileBadge = styled.span`
  position: absolute;
  right: 2px;
  top: 2px;
`;

const Tray = styled.div`
  margin-left: auto;
  display: flex;
  align-items: center;
`;

const RightTime = styled.div`
  width: 100%;
  display: flex;
  flex-direction: column;
  align-items: flex-end;
  padding-bottom: 1px;
`;

const Notice = styled.div`
  margin-left: 7px;
`;

const apps = [
  { icon: <TaskViewLogo /> },
  { icon: <><WeatherLogo /><TempBadge>22°</TempBadge></> },
  { icon: <ChatLogo s={23} /> },
  { icon: <FolderLogo s={24} /> },
  { icon: <EdgeLogo s={29} />, run: true },
  { icon: <RoundBadge $s={24} $bg="#5865f2"><FaDiscord size={16} color="#fff" /></RoundBadge>, run: true },
  { icon: <Svg s={23} box="0 0 23 23"><rect width="23" height="23" rx="2.500" fill="#1d57a5" /><path fill="#7a4aa0" d="M12 0h9a2 2 0 0 1 2 2v14z" opacity=".6" /><path fill="#43c3f3" d="M0 20L10 9.500c1-1 2-1 3 0L23 20v1a2 2 0 0 1-2 2H2a2 2 0 0 1-2-2z" /><path fill="#1f7fd6" d="M14 13l-10 10h17a2 2 0 0 0 2-2z" opacity=".55" /><circle cx="16.500" cy="4.500" r="2" fill="#fff" /></Svg>, run: true },
  { icon: <Svg s={24}><path fill="#35b5cf" d="M3 2h18v18H3z" /><path fill="#176b86" d="M5 0h1.600v3.500H5zM9 0h1.600v3.500H9zM13.400 0H15v3.500h-1.600zM17.400 0H19v3.500h-1.600z" /><path stroke="#0f5c75" strokeWidth="1.600" d="M6 7h12M6 11h12M6 15h12" /><path fill="#f5f5f5" d="M3 20h18v2H3z" /><path fill="#9b5526" d="M3 22h18v2H3z" /></Svg>, run: true },
  { icon: <PaintLogo />, run: true },
  { icon: <RoundBadge $s={23} $bg="#111"><FaSpotify size={24} color="#1ed760" /></RoundBadge>, run: true },
  { icon: <><ChromeLogo s={29} /><ProfileBadge><RoundBadge $s={16} $bg="#5c6bc0" $font="500 9px/1 Roboto, sans-serif">G</RoundBadge></ProfileBadge></>, run: true, active: true },
  { icon: <VsCodeLogo s={28} />, run: true },
];

const Lanterns = () => (
  <svg width="56" height="29" viewBox="0 0 56 29">
    <path fill="#77708a" d="M0 29c8-7 18-9 30-8.500 10 .3 18-.5 26 .5v8z" />
    <path fill="#c9a25a" opacity=".7" d="M14 25c5-4 12-3 18 1z" />
    <path fill="#b5606a" opacity=".7" d="M32 22c6-2 13-2 18 1z" />
    <path fill="#5b4024" d="M23.500 5.500c3 1 5 2.500 6 6H17.500c1-3.500 3-5 6-6zM18 24h11.500v2H18z" />
    <path fill="#f8cf3f" stroke="#5b4024" strokeWidth="1.400" d="M18.500 11h10.500l-.7 13.500h-9z" />
    <path fill="#fff3a6" d="M21.800 13h4v9.500h-4z" />
    <path fill="#5b3024" d="M39 7.500c2.500 1 4 2.500 4.800 5h-9.600c.8-2.500 2.300-4 4.800-5zM34.300 21.500h9.500v1.800h-9.500z" />
    <path fill="#d9564c" stroke="#5b3024" strokeWidth="1.300" d="M34.800 12.500h8.500l-.5 9h-7.500z" />
    <path fill="#f7b29a" d="M37.500 14h3v6h-3z" />
  </svg>
);

const WindowsTaskbar = () => (
  <Taskbar>
    <WinLogo />
    <SearchBox>
      <Svg s={16} box="0 0 16 16"><circle cx="6.800" cy="6.800" r="5.600" stroke="#222" strokeWidth="1.800" /><path stroke="#222" strokeWidth="1.900" d="M10.800 10.800l4.500 4.500" /></Svg>
      <Text $size={13.5} $ml={10} $ls={-0.25} $color="#5c6265">Search</Text>
      <Lanterns />
    </SearchBox>
    {apps.map((a, i) => <AppCell key={i} $running={a.run} $active={a.active}>{a.icon}</AppCell>)}
    <Tray>
      <Cell><Svg s={10} box="0 0 10 10"><path stroke="#222" strokeWidth="1.300" d="M.5 7.500L5 3l4.500 4.500" /></Svg></Cell>
      <Cell><Svg s={17} box="0 0 17 17"><path fill="#d9d9d9" stroke="#222" strokeWidth="1.200" d="M4.500 13.500a3.600 3.600 0 0 1-.5-7 5 5 0 0 1 9-.2 3.700 3.700 0 0 1 0 7.200z" /><path fill="#777" d="M4 6.800C6 3 11 3 12.500 6.500 10 6.500 9 9 6 9.500z" /></Svg></Cell>
      <Cell><Mic size={17} strokeWidth={1.700} color="#1c6670" /></Cell>
      <Cell $w={44}>
        <Stack $align="center">
          <Text $size={11.7} $lh="16px">ENG</Text>
          <Text $size={11.7} $lh="16px">IN</Text>
        </Stack>
      </Cell>
      <Cell><Wifi size={17} strokeWidth={1.700} color="#222" /></Cell>
      <Cell $w={16}><Volume2 size={17} strokeWidth={1.500} color="#222" /></Cell>
      <Cell><Svg s={17} box="0 0 17 17"><rect x="1.500" y="5" width="12.500" height="8" rx="1.500" stroke="#111" strokeWidth="1.300" /><path fill="#111" d="M4 7h6.500v4H4zM15 7.500h1.500v3H15zM3 1.500l-2 5h2L2 10l4-5H4l1-3.500z" /></Svg></Cell>
      <Cell $w={71}>
        <RightTime>
          <Text $size={11.8} $lh="16px" $ls={0.1}>22:46</Text>
          <Text $size={11.8} $lh="16px" $ls={0.1}>22-03-2023</Text>
        </RightTime>
      </Cell>
      <Notice><RoundBadge $s={16} $bg="#1f6f7b" $font='600 10px/1 "Open Sans", sans-serif'>3</RoundBadge></Notice>
    </Tray>
  </Taskbar>
);

export default function App() {
  return (
    <Desktop>
      <Global />
      <Browser />
      <Conference />
      <WindowsTaskbar />
    </Desktop>
  );
}
